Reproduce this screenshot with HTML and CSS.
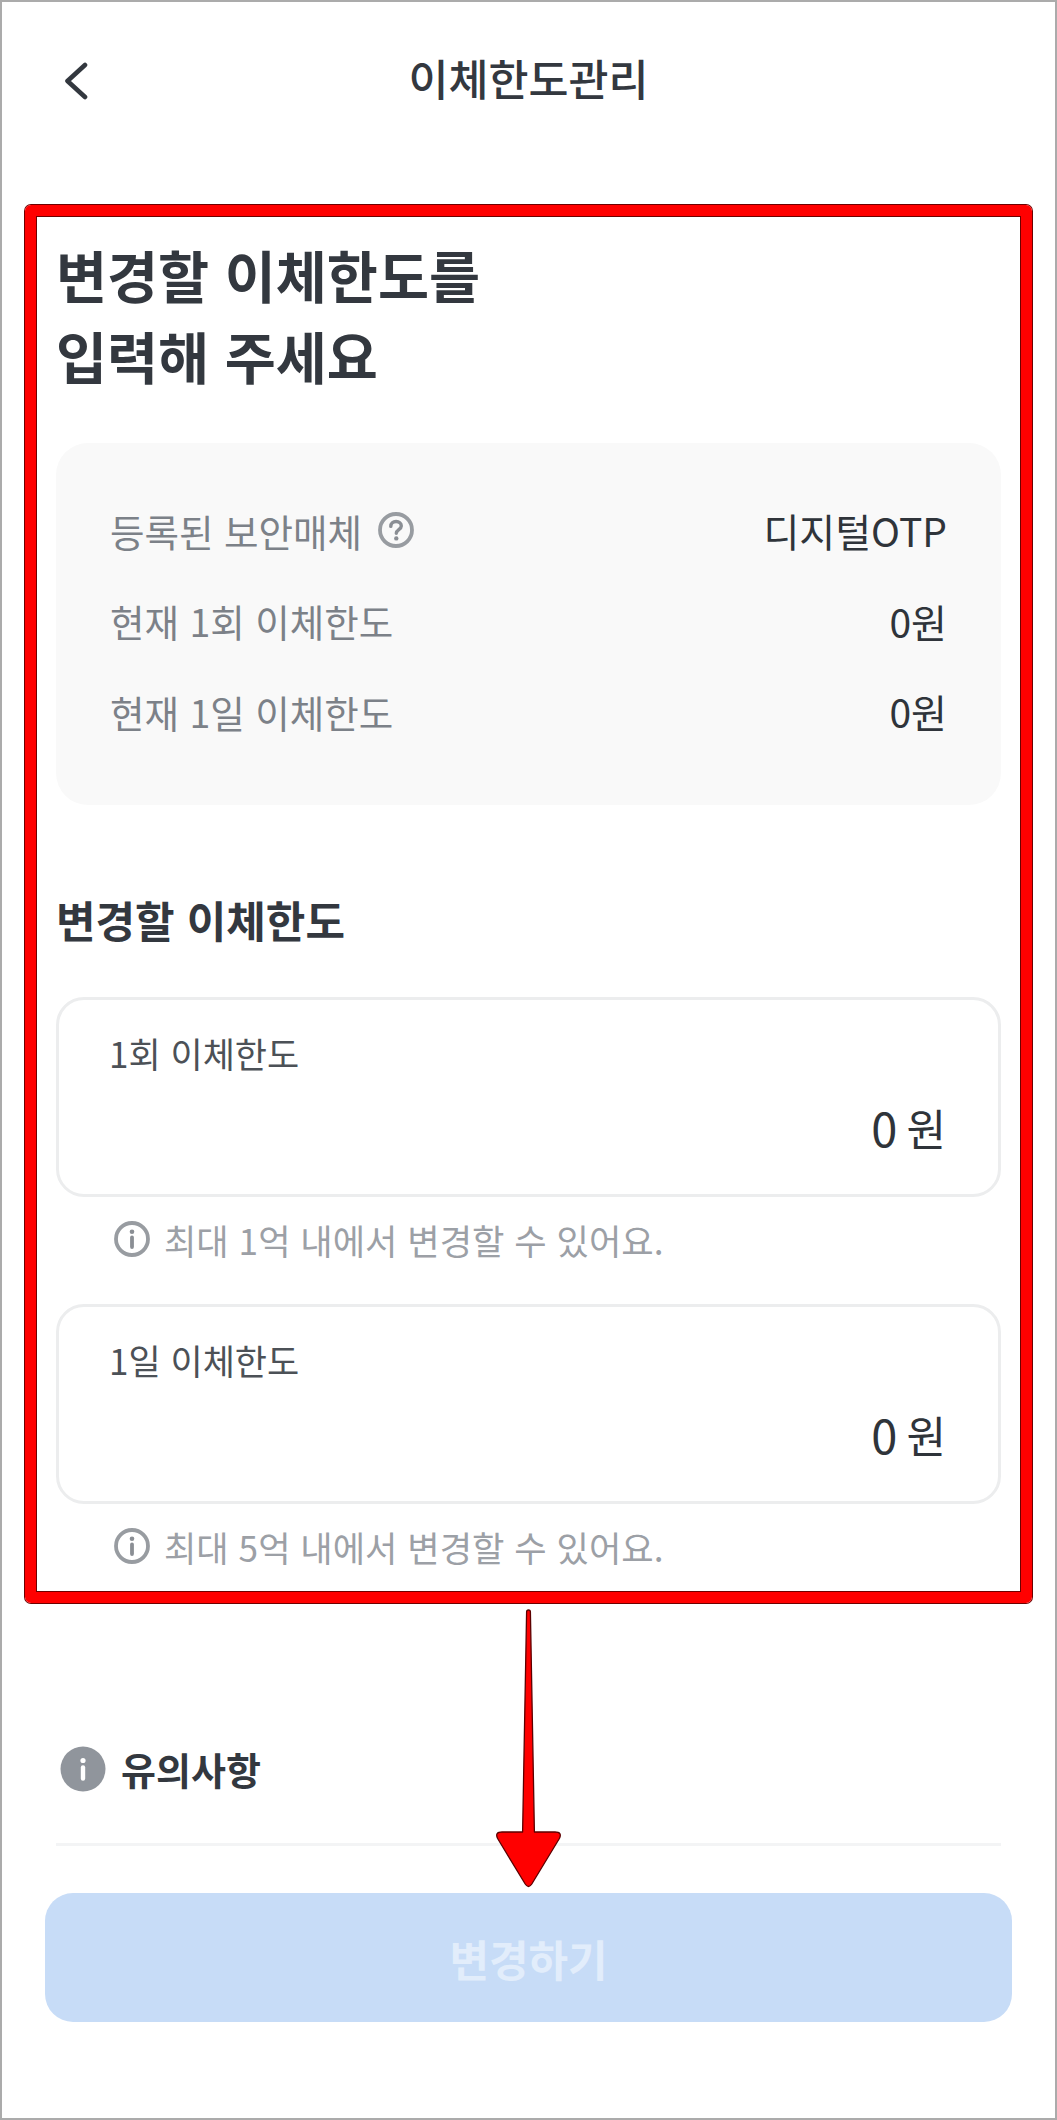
FILE: index.html
```html
<!DOCTYPE html>
<html lang="ko">
<head>
<meta charset="utf-8">
<title>이체한도관리</title>
<link rel="stylesheet" href="styles.css">
</head>
<body>
<div class="page">
  <header class="topbar">
    <svg class="back" viewBox="0 0 24 38" width="24" height="38" aria-hidden="true"><path d="M21 3 3.5 19 21 35" fill="none" stroke="#33383f" stroke-width="4.6" stroke-linecap="round" stroke-linejoin="round"/></svg>
    <h2 class="title">이체한도관리</h2>
  </header>

  <section class="highlight">
    <h1 class="headline">변경할 이체한도를<br>입력해 주세요</h1>

    <div class="summary">
      <div class="row">
        <span class="row-label">등록된 보안매체
          <svg class="icon" viewBox="0 0 36 36" width="36" height="36" aria-hidden="true"><circle cx="18" cy="18" r="16" fill="none" stroke="#989ca1" stroke-width="3.8"/><path d="M12.8 14.4c0-3 2.3-4.9 5.3-4.9s5.2 1.8 5.2 4.4c0 3.6-5 3.8-5 7.4" fill="none" stroke="#8a8e94" stroke-width="3.4" stroke-linecap="round"/><circle cx="18.3" cy="26.4" r="2.2" fill="#8a8e94"/></svg>
        </span>
        <span class="row-value">디지털OTP</span>
      </div>
      <div class="row">
        <span class="row-label">현재 1회 이체한도</span>
        <span class="row-value">0원</span>
      </div>
      <div class="row">
        <span class="row-label">현재 1일 이체한도</span>
        <span class="row-value">0원</span>
      </div>
    </div>

    <h2 class="subhead">변경할 이체한도</h2>

    <div class="field">
      <div class="field-label">1회 이체한도</div>
      <div class="field-value"><span class="amount">0</span><span>원</span></div>
    </div>
    <p class="hint">
      <svg class="icon" viewBox="0 0 36 36" width="36" height="36" aria-hidden="true"><circle cx="18" cy="18" r="16" fill="none" stroke="#989ca1" stroke-width="3.8"/><circle cx="18" cy="10.8" r="2.3" fill="#8a8e94"/><path d="M18 16.5v9.5" stroke="#8a8e94" stroke-width="3.8" stroke-linecap="round"/></svg>
      최대 1억 내에서 변경할 수 있어요.
    </p>

    <div class="field field-second">
      <div class="field-label">1일 이체한도</div>
      <div class="field-value"><span class="amount">0</span><span>원</span></div>
    </div>
    <p class="hint">
      <svg class="icon" viewBox="0 0 36 36" width="36" height="36" aria-hidden="true"><circle cx="18" cy="18" r="16" fill="none" stroke="#989ca1" stroke-width="3.8"/><circle cx="18" cy="10.8" r="2.3" fill="#8a8e94"/><path d="M18 16.5v9.5" stroke="#8a8e94" stroke-width="3.8" stroke-linecap="round"/></svg>
      최대 5억 내에서 변경할 수 있어요.
    </p>
  </section>

  <div class="notice">
    <svg viewBox="0 0 46 46" width="46" height="46" aria-hidden="true"><circle cx="23" cy="23" r="22.5" fill="#90959c"/><circle cx="23" cy="14.5" r="2.6" fill="#fff"/><path d="M23 21.5v11" stroke="#fff" stroke-width="4.4" stroke-linecap="round"/></svg>
    <span class="notice-text">유의사항</span>
  </div>
  <div class="divider"></div>

  <button class="submit" type="button">변경하기</button>

  <svg class="arrow" viewBox="0 0 80 290" width="80" height="290" aria-hidden="true"><path d="M36.6 7Q36.6 5 38.5 5T40.4 7L44.4 227H65Q72.5 227 69.4 233.5L41.8 279Q38.5 284 35.2 279L7.6 233.5Q4.5 227 12 227H32.6Z" fill="#ff0000" stroke="#5c0000" stroke-width="1.3" stroke-linejoin="round"/></svg>
</div>
</body>
</html>
```

FILE: styles.css
```css
* { box-sizing: border-box; }
html, body { margin: 0; padding: 0; background: #fff; }
body {
  font-family: "Noto Sans CJK KR", "Noto Sans", sans-serif;
  color: #33383f;
}
.page {
  position: relative;
  width: 1057px;
  height: 2120px;
  border: 2px solid #ababab;
  overflow: hidden;
  background: #fff;
}
.topbar {
  position: relative;
  height: 156px;
  padding-top: 51px;
  display: flex;
  justify-content: center;
}
.back { position: absolute; left: 62px; top: 60px; }
.title {
  margin: 0;
  font-size: 43.5px;
  line-height: 50px;
  font-weight: 500;
}
.highlight {
  width: 1007px;
  height: 1398px;
  margin: 47px 0 0 23px;
  padding: 18px 20px 0;
  border: 11px solid #ff0000;
  border-radius: 6px;
  box-shadow: 0 0 0 1px #6e0000, inset 0 0 0 1px #6e0000;
}
.headline {
  margin: 0 0 47px;
  font-size: 55.5px;
  line-height: 81px;
  font-weight: 700;
}
.summary {
  height: 362px;
  padding: 42px 54px 0 54px;
  border-radius: 32px;
  background: #f9f9f9;
}
.row {
  height: 90.5px;
  display: flex;
  justify-content: space-between;
  align-items: center;
}
.row-label {
  display: flex;
  align-items: center;
  gap: 16px;
  font-size: 37.5px;
  color: #7c8188;
}
.row-value {
  font-size: 39px;
  font-weight: 400;
  color: #2f343a;
}
.subhead {
  margin: 84px 0 48px;
  font-size: 43px;
  line-height: 60px;
  font-weight: 700;
}
.field {
  height: 200px;
  padding: 28px 52px 0 50px;
  border: 3px solid #ecedee;
  border-radius: 28px;
}
.field-second { margin-top: 40px; }
.field-label {
  font-size: 35px;
  line-height: 50px;
  color: #4c5157;
}
.field-value {
  display: flex;
  justify-content: flex-end;
  gap: 9px;
  margin-top: 19px;
  font-size: 43px;
  line-height: 60px;
  color: #2f343a;
}
.amount { font-size: 47px; }
.hint {
  display: flex;
  align-items: center;
  gap: 14px;
  height: 50px;
  margin: 17px 0 0;
  padding-left: 58px;
  font-size: 35.2px;
  color: #9ca0a6;
  white-space: nowrap;
}
.notice {
  display: flex;
  align-items: center;
  gap: 15px;
  margin: 143px 0 0 58px;
  height: 46px;
}
.notice-text {
  font-size: 38px;
  line-height: 46px;
  font-weight: 700;
}
.divider {
  height: 3px;
  margin: 51px 54px 0;
  background: #f3f4f5;
}
.submit {
  display: block;
  width: 967px;
  height: 129px;
  margin: 47px 0 0 43px;
  border: 0;
  border-radius: 28px;
  background: #c7dcf7;
  color: #e2edfb;
  font-family: inherit;
  font-size: 43px;
  font-weight: 700;
}
.arrow { position: absolute; left: 488px; top: 1603px; }
```
